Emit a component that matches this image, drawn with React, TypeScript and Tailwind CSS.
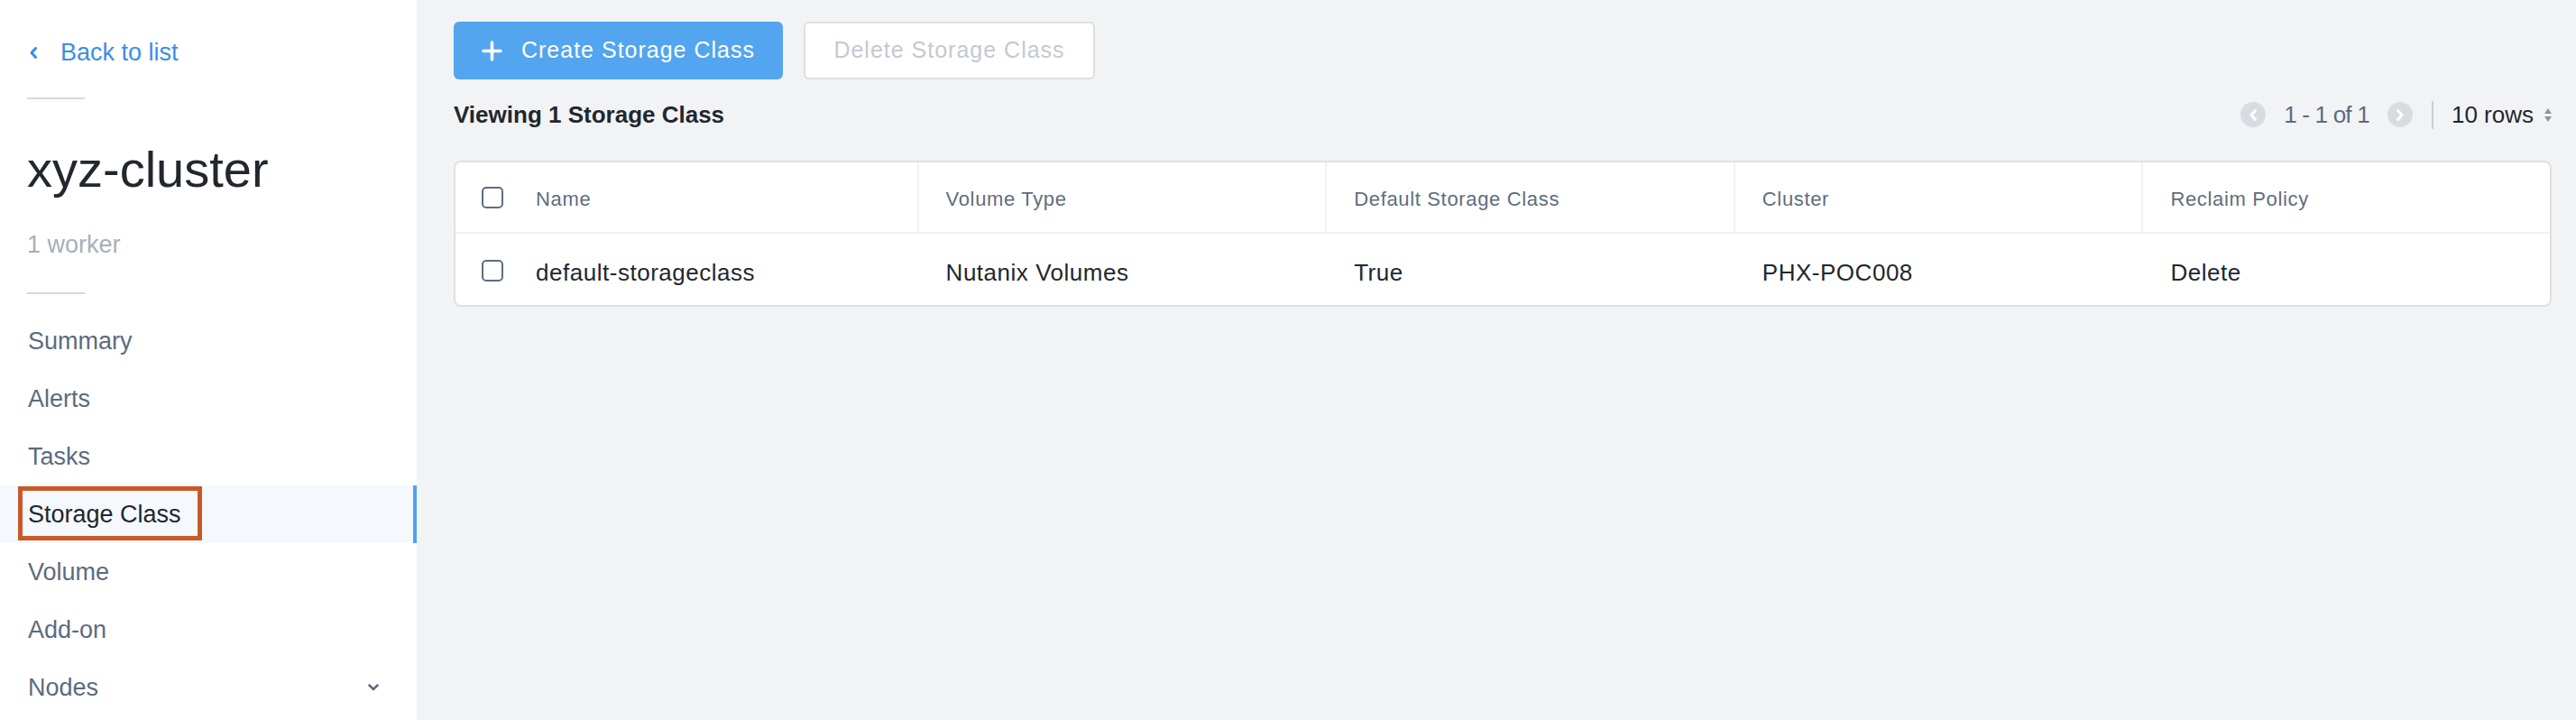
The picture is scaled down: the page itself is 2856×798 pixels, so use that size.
import React from 'react';

type NavItem = { label: string; active?: boolean; expandable?: boolean };

const navItems: NavItem[] = [
  { label: 'Summary' },
  { label: 'Alerts' },
  { label: 'Tasks' },
  { label: 'Storage Class', active: true },
  { label: 'Volume' },
  { label: 'Add-on' },
  { label: 'Nodes', expandable: true },
];

const columns = ['Name', 'Volume Type', 'Default Storage Class', 'Cluster', 'Reclaim Policy'];
const rows = [['default-storageclass', 'Nutanix Volumes', 'True', 'PHX-POC008', 'Delete']];

const Checkbox = () => (
  <span className="block w-[24px] h-[24px] rounded-[5px] border-2 border-[#5f6d80] bg-white" />
);

const Chevron = ({ dir }: { dir: 'left' | 'right' }) => (
  <svg width="9" height="13" viewBox="0 0 9 13" fill="none">
    <path
      d={dir === 'left' ? 'M6.5 1.5 L2 6.5 L6.5 11.5' : 'M2.5 1.5 L7 6.5 L2.5 11.5'}
      stroke="currentColor"
      strokeWidth="3"
      strokeLinecap="round"
      strokeLinejoin="round"
    />
  </svg>
);

function Sidebar() {
  return (
    <aside className="w-[462px] shrink-0 bg-white flex flex-col">
      <a className="mt-[38px] ml-[33px] flex items-center h-[40px] text-[27px] leading-[40px] text-[#3a8ee6] cursor-pointer">
        <span className="text-[#3a8ee6]">
          <Chevron dir="left" />
        </span>
        <span className="ml-[25px]">Back to list</span>
      </a>
      <div className="mt-[30px] ml-[30px] w-[64px] h-[2px] bg-[#d5d9de]" />
      <h1 className="mt-[46px] ml-[30px] text-[56px] leading-[64px] font-normal text-[#22272e]">xyz-cluster</h1>
      <p className="mt-[31px] ml-[30px] text-[27px] leading-[40px] text-[#a7afbb]">1 worker</p>
      <div className="mt-[33px] ml-[30px] w-[64px] h-[2px] bg-[#d5d9de]" />
      <nav className="mt-[20px] flex flex-col">
        {navItems.map((item) => (
          <div
            key={item.label}
            className={`relative h-[64px] flex items-center justify-between pl-[31px] text-[27px] ${
              item.active ? 'bg-[#f5f9fd] border-r-4 border-[#4da3ee] text-[#22272e] pr-[38px]' : 'text-[#5c6b7e] pr-[42px]'
            }`}
          >
            <span>{item.label}</span>
            {item.expandable && (
              <svg width="12" height="8" viewBox="0 0 12 8" fill="none">
                <path d="M1.5 1.5 L6 6 L10.5 1.5" stroke="#5c6b7e" strokeWidth="2.5" strokeLinecap="round" strokeLinejoin="round" />
              </svg>
            )}
            {item.active && (
              <span className="absolute left-[20px] top-[1px] w-[204px] h-[60px] border-[5px] border-[#c95a28]" />
            )}
          </div>
        ))}
      </nav>
    </aside>
  );
}

function Pagination() {
  return (
    <div className="flex items-center">
      <span className="w-[28px] h-[28px] rounded-full bg-[#d8dce2] text-white flex items-center justify-center">
        <Chevron dir="left" />
      </span>
      <span className="ml-[20px] text-[26px] tracking-[-0.03em] text-[#5d6b7d]">1 - 1 of 1</span>
      <span className="ml-[20px] w-[28px] h-[28px] rounded-full bg-[#d8dce2] text-white flex items-center justify-center">
        <Chevron dir="right" />
      </span>
      <span className="ml-[21px] w-[2px] h-[31px] bg-[#c9ced5]" />
      <span className="ml-[20px] text-[26px] text-[#22272e]">10 rows</span>
      <span className="ml-[12px] flex flex-col items-center gap-[3px]">
        <svg width="8" height="6" viewBox="0 0 8 6">
          <path d="M4 0 L8 6 L0 6 Z" fill="#8a96a5" />
        </svg>
        <svg width="8" height="6" viewBox="0 0 8 6">
          <path d="M0 0 L8 0 L4 6 Z" fill="#8a96a5" />
        </svg>
      </span>
    </div>
  );
}

function StorageTable() {
  return (
    <div className="mt-[12px] border-2 border-[#dde0e4] rounded-[8px] bg-white overflow-hidden">
      <div className="grid grid-cols-[59px_repeat(5,1fr)] h-[79px] border-b-2 border-[#eff1f3]">
        <div className="flex items-center pl-[29px]">
          <Checkbox />
        </div>
        {columns.map((col, i) => (
          <div
            key={col}
            className={`flex items-center pl-[30px] pt-[4px] text-[22px] tracking-[0.03em] text-[#5f6d7e] ${
              i > 0 ? 'border-l-2 border-[#f0f1f4]' : ''
            }`}
          >
            {col}
          </div>
        ))}
      </div>
      {rows.map((row) => (
        <div key={row[0]} className="grid grid-cols-[59px_repeat(5,1fr)] h-[79px] pt-[3px]">
          <div className="flex items-center pl-[29px]">
            <Checkbox />
          </div>
          {row.map((cell, i) => (
            <div
              key={i}
              className={`flex items-center pl-[30px] pt-[4px] text-[26px] tracking-[0.02em] text-[#22272e] ${
                i > 0 ? 'border-l-2 border-transparent' : ''
              }`}
            >
              {cell}
            </div>
          ))}
        </div>
      ))}
    </div>
  );
}

export default function App() {
  return (
    <div className="flex w-full h-[798px] bg-[#f2f3f5] font-['Liberation_Sans',Arial,sans-serif] overflow-hidden">
      <Sidebar />
      <main className="flex-1 min-w-0 pl-[41px] pr-[27px] pt-[24px]">
        <div className="flex gap-[23px]">
          <button className="w-[365px] h-[64px] rounded-[6px] bg-[#52a5ee] text-white flex items-center justify-center gap-[21px] text-[25px] tracking-[0.04em]">
            <svg width="23" height="23" viewBox="0 0 23 23" fill="none">
              <path d="M11.5 2 V21 M2 11.5 H21" stroke="white" strokeWidth="3.5" strokeLinecap="round" />
            </svg>
            <span>Create Storage Class</span>
          </button>
          <button className="w-[323px] h-[64px] rounded-[6px] border-2 border-[#dcdfe3] bg-white text-[#c4c9d0] flex items-center justify-center text-[25px] tracking-[0.04em]">
            Delete Storage Class
          </button>
        </div>
        <div className="h-[78px] flex items-center justify-between">
          <p className="text-[26px] font-bold text-[#22272e]">Viewing 1 Storage Class</p>
          <Pagination />
        </div>
        <StorageTable />
      </main>
    </div>
  );
}
